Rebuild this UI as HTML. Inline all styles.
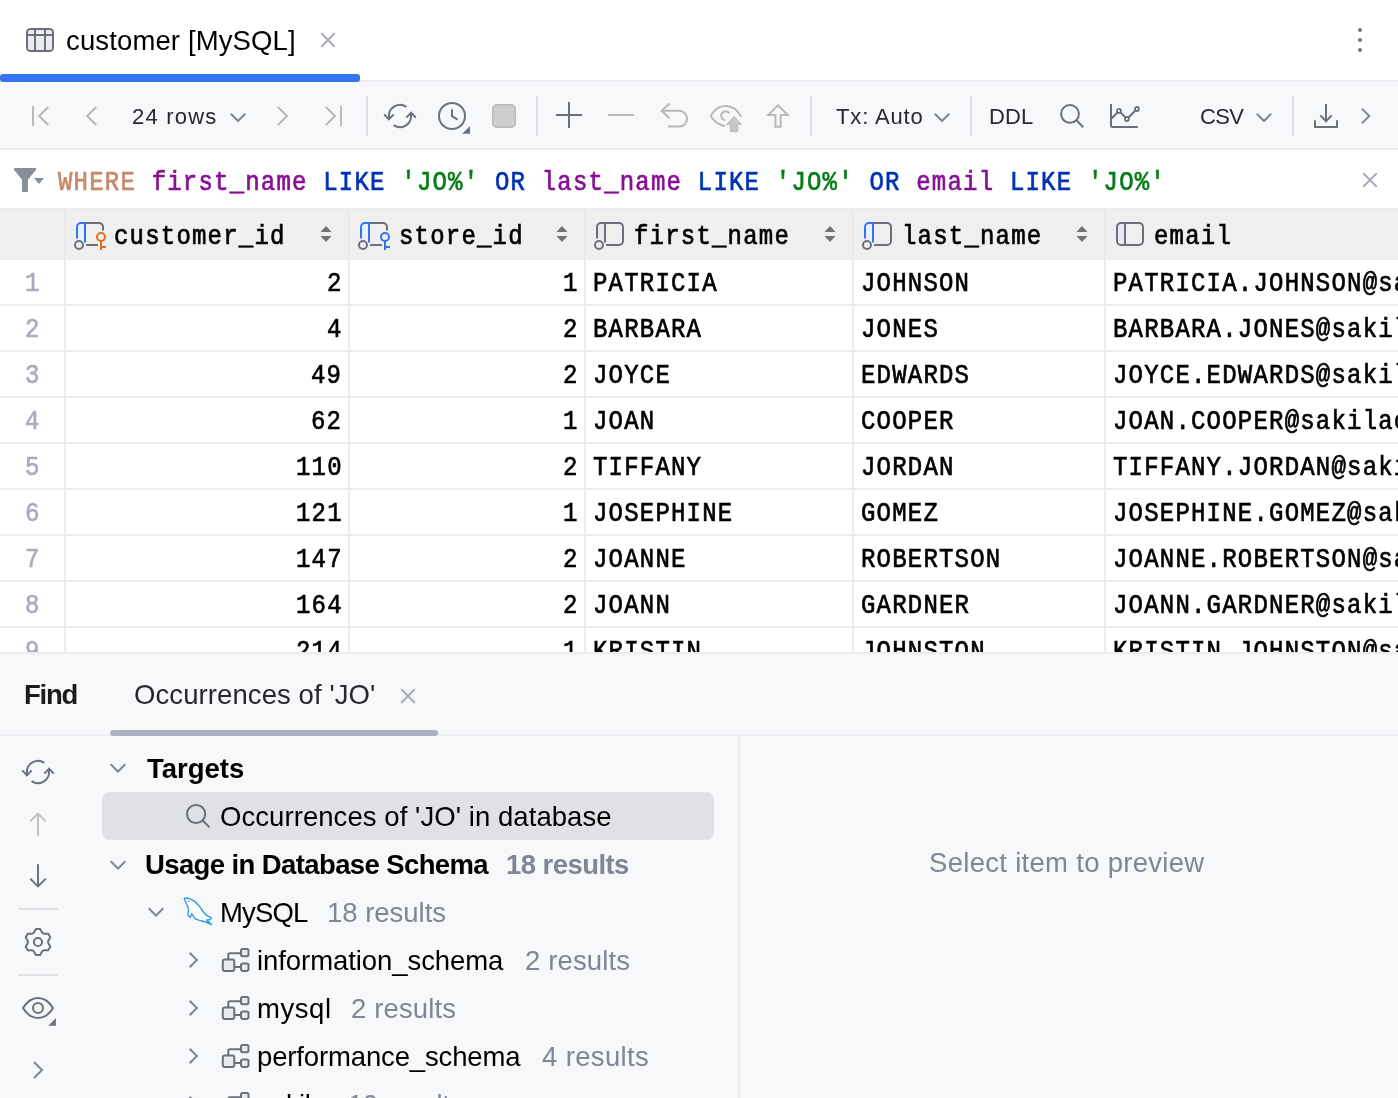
<!DOCTYPE html>
<html><head><meta charset="utf-8"><title>customer [MySQL]</title>
<style>
*{box-sizing:border-box;margin:0;padding:0}
html,body{width:1398px;height:1098px;overflow:hidden;background:#fff}
body{position:relative;font-family:"Liberation Sans",sans-serif;color:#000}
.abs{position:absolute}
.t{position:absolute;white-space:pre;line-height:1;will-change:transform}
.mono{font-family:"Liberation Mono",monospace;font-size:24px;letter-spacing:1.2px;transform:scaleY(1.18);transform-origin:0 18.39px;-webkit-text-stroke:0.6px currentColor}
svg{position:absolute;overflow:visible}
#tabbar{left:0;top:0;width:1398px;height:82px;background:#fff;border-bottom:2px solid #ebecf0}
#tabline{left:0;top:74px;width:360px;height:8px;background:#3574f0;border-radius:3px}
#toolbar{left:0;top:82px;width:1398px;height:68px;background:#f7f8fa;border-bottom:2px solid #ebecf0}
.sep{position:absolute;top:96px;width:2px;height:40px;background:#dcdee3}
#filter{left:0;top:150px;width:1398px;height:58px;background:#fff}
#thead{left:0;top:208px;width:1398px;height:52px;background:#efefef;border-top:2px solid #ebecf0}
#bottom{left:0;top:652px;width:1398px;height:446px;background:#f7f8fa;border-top:2px solid #ebecf0}
.up{transform:translateY(-1px) scaleY(1.18)}
</style></head><body>
<div id="tabbar" class="abs"></div>
<div id="tabline" class="abs"></div>
<div id="toolbar" class="abs"></div>
<div id="filter" class="abs"></div>
<div id="thead" class="abs"></div>
<div id="bottom" class="abs"></div>
<!--TAB-->
<svg style="left:25px;top:27px" width="30" height="26" viewBox="0 0 30 26"><rect x="2" y="2" width="26" height="22" rx="3.5" fill="#ebecf0" stroke="#6c707e" stroke-width="2"/><path d="M2 8H28M10 2V24M20 2V24" stroke="#6c707e" stroke-width="2" fill="none"/></svg>
<div class="t" style="left:66.00px;top:27.07px;font-size:27.5px;color:#000;letter-spacing:0.133px;">customer [MySQL]</div>
<svg style="left:320px;top:32px" width="16" height="16" viewBox="0 0 16 16"><path d="M1.8 1.8L14.2 14.2M14.2 1.8L1.8 14.2" stroke="#a8adbd" stroke-width="2" stroke-linecap="round" fill="none"/></svg>
<svg style="left:1354px;top:24px" width="12" height="32" viewBox="0 0 12 32"><circle cx="6" cy="6" r="2" fill="#6c707e"/><circle cx="6" cy="16" r="2" fill="#6c707e"/><circle cx="6" cy="26" r="2" fill="#6c707e"/></svg>
<!--TOOLBAR-->
<div class="sep" style="left:366px"></div>
<div class="sep" style="left:536px"></div>
<div class="sep" style="left:810px"></div>
<div class="sep" style="left:970px"></div>
<div class="sep" style="left:1292px"></div>
<svg style="left:32px;top:106px" width="18" height="20" viewBox="0 0 18 20" fill="none" stroke-width="2" stroke-linecap="butt" stroke-linejoin="miter"><path d="M1 0V20M16.3 1L7.2 10L16.3 19" stroke="#b8b8b8"/></svg>
<svg style="left:86px;top:106px" width="12" height="20" viewBox="0 0 12 20" fill="none" stroke-width="2" stroke-linecap="butt" stroke-linejoin="miter"><path d="M10.3 1L1.2 10L10.3 19" stroke="#b8b8b8"/></svg>
<div class="t" style="left:132.00px;top:105.72px;font-size:22px;color:#27282e;letter-spacing:1.200px;">24 rows</div>
<svg style="left:230px;top:113px" width="16" height="10" viewBox="0 0 16 10" fill="none" stroke-width="2" stroke-linecap="butt" stroke-linejoin="miter"><path d="M0.8 0.8L8 8L15.2 0.8" stroke="#818594"/></svg>
<svg style="left:276px;top:106px" width="12" height="20" viewBox="0 0 12 20" fill="none" stroke-width="2" stroke-linecap="butt" stroke-linejoin="miter"><path d="M1.9 1L11 10L1.9 19" stroke="#b8b8b8"/></svg>
<svg style="left:324px;top:106px" width="18" height="20" viewBox="0 0 18 20" fill="none" stroke-width="2" stroke-linecap="butt" stroke-linejoin="miter"><path d="M17 0V20M1.9 1L11 10L1.9 19" stroke="#b8b8b8"/></svg>
<svg style="left:384px;top:100px" width="32" height="32" viewBox="0 0 32 32" fill="none" stroke-width="2" stroke-linecap="butt" stroke-linejoin="miter"><path d="M4.9 19V16A11.1 11.1 0 0 1 22.4 6.9M27.1 13V16A11.1 11.1 0 0 1 9.6 25.1" stroke="#6c707e"/><path d="M0.2 14.4L4.9 19.4L9.6 14.4M22.4 17.6L27.1 12.6L31.8 17.6" stroke="#6c707e"/></svg>
<svg style="left:438px;top:102px" width="34" height="34" viewBox="0 0 34 34" fill="none" stroke-width="2" stroke-linecap="butt" stroke-linejoin="miter"><circle cx="14" cy="14" r="13" stroke="#6c707e"/><path d="M14 7.2V14.2L19.6 17.6" stroke="#6c707e"/><path d="M32 24V31.8H24.2Z" fill="#6c707e" stroke="none"/></svg>
<svg style="left:492px;top:104px" width="24" height="24" viewBox="0 0 24 24" fill="none" stroke-width="2" stroke-linecap="butt" stroke-linejoin="miter"><rect x="0.75" y="0.75" width="22.5" height="22.5" rx="4" fill="#cecece" stroke="#b9b9b9" stroke-width="1.5"/></svg>
<svg style="left:556px;top:102px" width="26" height="26" viewBox="0 0 26 26" fill="none" stroke-width="2" stroke-linecap="butt" stroke-linejoin="miter"><path d="M13 0V26M0 13H26" stroke="#6c707e"/></svg>
<svg style="left:608px;top:113px" width="26" height="4" viewBox="0 0 26 4" fill="none" stroke-width="2" stroke-linecap="butt" stroke-linejoin="miter"><path d="M0 2H26" stroke="#b8b8b8"/></svg>
<svg style="left:660px;top:102px" width="30" height="28" viewBox="0 0 30 28" fill="none" stroke-width="2" stroke-linecap="butt" stroke-linejoin="miter"><path d="M9.6 1.5L1.6 8.8L9.6 16.3M2 8.8H19.2A7.9 7.9 0 0 1 19.2 24.6H8.2" stroke="#b8b8b8"/></svg>
<svg style="left:708px;top:102px" width="36" height="32" viewBox="0 0 36 32" fill="none" stroke-width="2" stroke-linecap="butt" stroke-linejoin="miter"><path d="M2.6 13.8C6 8 11 3.9 17.6 3.9S30 8.5 33.2 14.9M2.6 13.8C5.5 19 10.5 22.8 17 24" stroke="#b8b8b8"/><path d="M21.5 11.55A4.5 4.5 0 1 0 17.2 18.28" stroke="#b8b8b8"/><path d="M26 14.4L33.4 22.4H29.8V29.4H22.4V22.4H18.6Z" fill="#c8c8c8" stroke="#b8b8b8" stroke-width="1"/></svg>
<svg style="left:764px;top:102px" width="28" height="28" viewBox="0 0 28 28" fill="none" stroke-width="2" stroke-linecap="butt" stroke-linejoin="miter"><path d="M14 3.3L23.8 13.1H16.7V24.7H11.4V13.1H4.2Z" stroke="#b8b8b8"/></svg>
<div class="t" style="left:835.80px;top:105.72px;font-size:22px;color:#27282e;letter-spacing:0.857px;">Tx: Auto</div>
<svg style="left:934px;top:113px" width="16" height="10" viewBox="0 0 16 10" fill="none" stroke-width="2" stroke-linecap="butt" stroke-linejoin="miter"><path d="M0.8 0.8L8 8L15.2 0.8" stroke="#818594"/></svg>
<div class="t" style="left:989.30px;top:105.72px;font-size:22px;color:#27282e;letter-spacing:0.100px;">DDL</div>
<svg style="left:1058px;top:102px" width="28" height="28" viewBox="0 0 28 28" fill="none" stroke-width="2" stroke-linecap="butt" stroke-linejoin="miter"><circle cx="12" cy="11.9" r="8.9" stroke="#6c707e"/><path d="M18.4 18.3L25.3 25.2" stroke="#6c707e"/></svg>
<svg style="left:1108px;top:102px" width="32" height="28" viewBox="0 0 32 28" fill="none" stroke-width="2" stroke-linecap="butt" stroke-linejoin="miter"><path d="M3 2V23.4A1.5 1.5 0 0 0 4.5 24.9H29.8" stroke="#6c707e"/><path d="M3.5 16.5L11 8.9L18.9 17L28.9 7" stroke="#6c707e"/><circle cx="11" cy="8.9" r="2" fill="#f7f8fa" stroke="#6c707e" stroke-width="1.8"/><circle cx="18.9" cy="17" r="2" fill="#f7f8fa" stroke="#6c707e" stroke-width="1.8"/><circle cx="28.9" cy="7" r="2" fill="#f7f8fa" stroke="#6c707e" stroke-width="1.8"/></svg>
<div class="t" style="left:1200.00px;top:105.72px;font-size:22px;color:#27282e;letter-spacing:-0.600px;">CSV</div>
<svg style="left:1256px;top:113px" width="16" height="10" viewBox="0 0 16 10" fill="none" stroke-width="2" stroke-linecap="butt" stroke-linejoin="miter"><path d="M0.8 0.8L8 8L15.2 0.8" stroke="#818594"/></svg>
<svg style="left:1313px;top:102px" width="26" height="26" viewBox="0 0 26 26" fill="none" stroke-width="2" stroke-linecap="butt" stroke-linejoin="miter"><path d="M13 2V19M7.3 13.4L13 19.2L18.7 13.4M2 18.3V24.9H24V18.3" stroke="#6c707e"/></svg>
<svg style="left:1360px;top:106px" width="12" height="20" viewBox="0 0 12 20" fill="none" stroke-width="2" stroke-linecap="butt" stroke-linejoin="miter"><path d="M1.9 2.6L9.3 10L1.9 17.4" stroke="#818594"/></svg>
<!--FILTER-->
<svg style="left:13px;top:168px" width="32" height="24" viewBox="0 0 32 24" fill="none" stroke-width="2" stroke-linecap="butt" stroke-linejoin="miter"><path d="M1 0H23.1V1.8L14.9 11.7V24H9V11.7L1 1.8Z" fill="#85909a" stroke="none"/><path d="M21 10H31L26 16Z" fill="#85909a" stroke="none"/></svg>
<div class="t mono" style="left:58.40px;top:172.01px;color:#000;"><span style="color:#c8896a">WHERE</span> <span style="color:#871094">first_name</span> <span style="color:#0033b3">LIKE</span> <span style="color:#067d17">'JO%'</span> <span style="color:#0033b3">OR</span> <span style="color:#871094">last_name</span> <span style="color:#0033b3">LIKE</span> <span style="color:#067d17">'JO%'</span> <span style="color:#0033b3">OR</span> <span style="color:#871094">email</span> <span style="color:#0033b3">LIKE</span> <span style="color:#067d17">'JO%'</span></div>
<svg style="left:1362px;top:172px" width="16" height="16" viewBox="0 0 16 16"><path d="M1.8 1.8L14.2 14.2M14.2 1.8L1.8 14.2" stroke="#a8adbd" stroke-width="2" stroke-linecap="round" fill="none"/></svg>
<!--HEAD-->
<div class="abs" style="left:64px;top:210px;width:2px;height:48px;background:#e9eaee"></div>
<div class="abs" style="left:348px;top:210px;width:2px;height:48px;background:#e9eaee"></div>
<div class="abs" style="left:584px;top:210px;width:2px;height:48px;background:#e9eaee"></div>
<div class="abs" style="left:852px;top:210px;width:2px;height:48px;background:#e9eaee"></div>
<div class="abs" style="left:1104px;top:210px;width:2px;height:48px;background:#e9eaee"></div>
<div class="abs" style="left:0;top:258px;width:1398px;height:2px;background:#ebecf0"></div>
<svg style="left:72px;top:220px" width="36" height="32" viewBox="0 0 36 32" fill="none" stroke-width="2" stroke-linecap="butt" stroke-linejoin="miter"><path d="M6 19V6A2 2 0 0 1 8 4H12V19Z" fill="#e9f0ff" stroke="none"/><path d="M13 3H27A4 4 0 0 1 31 7V10.4M14.1 25H26" stroke="#6c707e"/><path d="M5 18.6V7A4 4 0 0 1 9 3H13.5M13 3V22.6" stroke="#3574f0"/><circle cx="7" cy="25" r="4" stroke="#6c707e"/><circle cx="29" cy="17" r="4" stroke="#e66d17"/><path d="M29 21V30M29 27H34" stroke="#e66d17"/></svg>
<div class="t mono" style="left:114.10px;top:226.01px;color:#000;">customer_id</div>
<svg style="left:320px;top:226px" width="12" height="16" viewBox="0 0 12 16" fill="none" stroke-width="2" stroke-linecap="butt" stroke-linejoin="miter"><path d="M6 0L11.5 6H0.5Z" fill="#737373" stroke="none"/><path d="M6 16L11.5 10H0.5Z" fill="#737373" stroke="none"/></svg>
<svg style="left:356px;top:220px" width="36" height="32" viewBox="0 0 36 32" fill="none" stroke-width="2" stroke-linecap="butt" stroke-linejoin="miter"><path d="M6 19V6A2 2 0 0 1 8 4H12V19Z" fill="#e9f0ff" stroke="none"/><path d="M13 3H27A4 4 0 0 1 31 7V10.4M14.1 25H26" stroke="#6c707e"/><path d="M5 18.6V7A4 4 0 0 1 9 3H13.5M13 3V22.6" stroke="#3574f0"/><circle cx="7" cy="25" r="4" stroke="#6c707e"/><circle cx="29" cy="17" r="4" stroke="#3574f0"/><path d="M29 21V30M29 27H34" stroke="#3574f0"/></svg>
<div class="t mono" style="left:398.60px;top:226.01px;color:#000;">store_id</div>
<svg style="left:556px;top:226px" width="12" height="16" viewBox="0 0 12 16" fill="none" stroke-width="2" stroke-linecap="butt" stroke-linejoin="miter"><path d="M6 0L11.5 6H0.5Z" fill="#737373" stroke="none"/><path d="M6 16L11.5 10H0.5Z" fill="#737373" stroke="none"/></svg>
<svg style="left:592px;top:220px" width="36" height="32" viewBox="0 0 36 32" fill="none" stroke-width="2" stroke-linecap="butt" stroke-linejoin="miter"><path d="M6 19V6A2 2 0 0 1 8 4H12V19Z" fill="#e9eaf0" stroke="none"/><path d="M13 3H27A4 4 0 0 1 31 7V21A4 4 0 0 1 27 25H14.1" stroke="#6c707e"/><path d="M5 18.6V7A4 4 0 0 1 9 3H13.5M13 3V22.6" stroke="#6c707e"/><circle cx="7" cy="25" r="4" stroke="#6c707e"/></svg>
<div class="t mono" style="left:634.10px;top:226.01px;color:#000;">first_name</div>
<svg style="left:824px;top:226px" width="12" height="16" viewBox="0 0 12 16" fill="none" stroke-width="2" stroke-linecap="butt" stroke-linejoin="miter"><path d="M6 0L11.5 6H0.5Z" fill="#737373" stroke="none"/><path d="M6 16L11.5 10H0.5Z" fill="#737373" stroke="none"/></svg>
<svg style="left:860px;top:220px" width="36" height="32" viewBox="0 0 36 32" fill="none" stroke-width="2" stroke-linecap="butt" stroke-linejoin="miter"><path d="M6 19V6A2 2 0 0 1 8 4H12V19Z" fill="#e9f0ff" stroke="none"/><path d="M13 3H27A4 4 0 0 1 31 7V21A4 4 0 0 1 27 25H14.1" stroke="#6c707e"/><path d="M5 18.6V7A4 4 0 0 1 9 3H13.5M13 3V22.6" stroke="#3574f0"/><circle cx="7" cy="25" r="4" stroke="#6c707e"/></svg>
<div class="t mono" style="left:902.10px;top:226.01px;color:#000;">last_name</div>
<svg style="left:1076px;top:226px" width="12" height="16" viewBox="0 0 12 16" fill="none" stroke-width="2" stroke-linecap="butt" stroke-linejoin="miter"><path d="M6 0L11.5 6H0.5Z" fill="#737373" stroke="none"/><path d="M6 16L11.5 10H0.5Z" fill="#737373" stroke="none"/></svg>
<svg style="left:1112px;top:220px" width="36" height="32" viewBox="0 0 36 32" fill="none" stroke-width="2" stroke-linecap="butt" stroke-linejoin="miter"><rect x="6" y="4" width="7" height="20" fill="#e9eaf0" stroke="none"/><rect x="5" y="3" width="26" height="22" rx="4" stroke="#6c707e"/><path d="M13 3V25" stroke="#6c707e"/></svg>
<div class="t mono" style="left:1154.10px;top:226.01px;color:#000;">email</div>
<!--ROWS-->
<div class="abs" style="left:0;top:260px;width:1398px;height:392px;overflow:hidden">
<div class="abs" style="left:64px;top:0;width:2px;height:392px;background:#ebecf0"></div>
<div class="abs" style="left:348px;top:0;width:2px;height:392px;background:#ebecf0"></div>
<div class="abs" style="left:584px;top:0;width:2px;height:392px;background:#ebecf0"></div>
<div class="abs" style="left:852px;top:0;width:2px;height:392px;background:#ebecf0"></div>
<div class="abs" style="left:1104px;top:0;width:2px;height:392px;background:#ebecf0"></div>
<div class="abs" style="left:0;top:44px;width:1398px;height:2px;background:#ebecf0"></div>
<div class="t mono up" style="left:24.60px;top:14.01px;color:#a8adbd;">1</div>
<div class="t mono up" style="left:327.00px;top:14.01px;color:#000;">2</div>
<div class="t mono up" style="left:563.00px;top:14.01px;color:#000;">1</div>
<div class="t mono up" style="left:592.60px;top:14.01px;color:#000;">PATRICIA</div>
<div class="t mono up" style="left:860.60px;top:14.01px;color:#000;">JOHNSON</div>
<div class="t mono up" style="left:1112.60px;top:14.01px;color:#000;">PATRICIA.JOHNSON@sakilacustomer.org</div>
<div class="abs" style="left:0;top:90px;width:1398px;height:2px;background:#ebecf0"></div>
<div class="t mono up" style="left:24.60px;top:60.01px;color:#a8adbd;">2</div>
<div class="t mono up" style="left:327.00px;top:60.01px;color:#000;">4</div>
<div class="t mono up" style="left:563.00px;top:60.01px;color:#000;">2</div>
<div class="t mono up" style="left:592.60px;top:60.01px;color:#000;">BARBARA</div>
<div class="t mono up" style="left:860.60px;top:60.01px;color:#000;">JONES</div>
<div class="t mono up" style="left:1112.60px;top:60.01px;color:#000;">BARBARA.JONES@sakilacustomer.org</div>
<div class="abs" style="left:0;top:136px;width:1398px;height:2px;background:#ebecf0"></div>
<div class="t mono up" style="left:24.60px;top:106.01px;color:#a8adbd;">3</div>
<div class="t mono up" style="left:311.40px;top:106.01px;color:#000;">49</div>
<div class="t mono up" style="left:563.00px;top:106.01px;color:#000;">2</div>
<div class="t mono up" style="left:592.60px;top:106.01px;color:#000;">JOYCE</div>
<div class="t mono up" style="left:860.60px;top:106.01px;color:#000;">EDWARDS</div>
<div class="t mono up" style="left:1112.60px;top:106.01px;color:#000;">JOYCE.EDWARDS@sakilacustomer.org</div>
<div class="abs" style="left:0;top:182px;width:1398px;height:2px;background:#ebecf0"></div>
<div class="t mono up" style="left:24.60px;top:152.01px;color:#a8adbd;">4</div>
<div class="t mono up" style="left:311.40px;top:152.01px;color:#000;">62</div>
<div class="t mono up" style="left:563.00px;top:152.01px;color:#000;">1</div>
<div class="t mono up" style="left:592.60px;top:152.01px;color:#000;">JOAN</div>
<div class="t mono up" style="left:860.60px;top:152.01px;color:#000;">COOPER</div>
<div class="t mono up" style="left:1112.60px;top:152.01px;color:#000;">JOAN.COOPER@sakilacustomer.org</div>
<div class="abs" style="left:0;top:228px;width:1398px;height:2px;background:#ebecf0"></div>
<div class="t mono up" style="left:24.60px;top:198.01px;color:#a8adbd;">5</div>
<div class="t mono up" style="left:295.80px;top:198.01px;color:#000;">110</div>
<div class="t mono up" style="left:563.00px;top:198.01px;color:#000;">2</div>
<div class="t mono up" style="left:592.60px;top:198.01px;color:#000;">TIFFANY</div>
<div class="t mono up" style="left:860.60px;top:198.01px;color:#000;">JORDAN</div>
<div class="t mono up" style="left:1112.60px;top:198.01px;color:#000;">TIFFANY.JORDAN@sakilacustomer.org</div>
<div class="abs" style="left:0;top:274px;width:1398px;height:2px;background:#ebecf0"></div>
<div class="t mono up" style="left:24.60px;top:244.01px;color:#a8adbd;">6</div>
<div class="t mono up" style="left:295.80px;top:244.01px;color:#000;">121</div>
<div class="t mono up" style="left:563.00px;top:244.01px;color:#000;">1</div>
<div class="t mono up" style="left:592.60px;top:244.01px;color:#000;">JOSEPHINE</div>
<div class="t mono up" style="left:860.60px;top:244.01px;color:#000;">GOMEZ</div>
<div class="t mono up" style="left:1112.60px;top:244.01px;color:#000;">JOSEPHINE.GOMEZ@sakilacustomer.org</div>
<div class="abs" style="left:0;top:320px;width:1398px;height:2px;background:#ebecf0"></div>
<div class="t mono up" style="left:24.60px;top:290.01px;color:#a8adbd;">7</div>
<div class="t mono up" style="left:295.80px;top:290.01px;color:#000;">147</div>
<div class="t mono up" style="left:563.00px;top:290.01px;color:#000;">2</div>
<div class="t mono up" style="left:592.60px;top:290.01px;color:#000;">JOANNE</div>
<div class="t mono up" style="left:860.60px;top:290.01px;color:#000;">ROBERTSON</div>
<div class="t mono up" style="left:1112.60px;top:290.01px;color:#000;">JOANNE.ROBERTSON@sakilacustomer.org</div>
<div class="abs" style="left:0;top:366px;width:1398px;height:2px;background:#ebecf0"></div>
<div class="t mono up" style="left:24.60px;top:336.01px;color:#a8adbd;">8</div>
<div class="t mono up" style="left:295.80px;top:336.01px;color:#000;">164</div>
<div class="t mono up" style="left:563.00px;top:336.01px;color:#000;">2</div>
<div class="t mono up" style="left:592.60px;top:336.01px;color:#000;">JOANN</div>
<div class="t mono up" style="left:860.60px;top:336.01px;color:#000;">GARDNER</div>
<div class="t mono up" style="left:1112.60px;top:336.01px;color:#000;">JOANN.GARDNER@sakilacustomer.org</div>
<div class="abs" style="left:0;top:412px;width:1398px;height:2px;background:#ebecf0"></div>
<div class="t mono up" style="left:24.60px;top:382.01px;color:#a8adbd;">9</div>
<div class="t mono up" style="left:295.80px;top:382.01px;color:#000;">214</div>
<div class="t mono up" style="left:563.00px;top:382.01px;color:#000;">1</div>
<div class="t mono up" style="left:592.60px;top:382.01px;color:#000;">KRISTIN</div>
<div class="t mono up" style="left:860.60px;top:382.01px;color:#000;">JOHNSTON</div>
<div class="t mono up" style="left:1112.60px;top:382.01px;color:#000;">KRISTIN.JOHNSTON@sakilacustomer.org</div>
</div>
<!--FIND-->
<div class="t" style="left:23.80px;top:681.07px;font-size:27.5px;color:#1b1b1d;letter-spacing:-1.267px;font-weight:bold;">Find</div>
<div class="t" style="left:134.30px;top:681.07px;font-size:27.5px;color:#27282e;letter-spacing:0.089px;">Occurrences of 'JO'</div>
<svg style="left:400px;top:688.3px" width="16" height="16" viewBox="0 0 16 16"><path d="M1.8 1.8L14.2 14.2M14.2 1.8L1.8 14.2" stroke="#a8adbd" stroke-width="2" stroke-linecap="round" fill="none"/></svg>
<div class="abs" style="left:0;top:734px;width:1398px;height:2px;background:#ebecf0"></div>
<div class="abs" style="left:110px;top:730px;width:328px;height:6px;background:#adb1c3;border-radius:3px"></div>
<div class="abs" style="left:738px;top:736px;width:2px;height:362px;background:#ebecf0"></div>
<svg style="left:22px;top:756px" width="32" height="32" viewBox="0 0 32 32" fill="none" stroke-width="2" stroke-linecap="butt" stroke-linejoin="miter"><path d="M4.9 19V16A11.1 11.1 0 0 1 22.4 6.9M27.1 13V16A11.1 11.1 0 0 1 9.6 25.1" stroke="#6c707e"/><path d="M0.2 14.4L4.9 19.4L9.6 14.4M22.4 17.6L27.1 12.6L31.8 17.6" stroke="#6c707e"/></svg>
<svg style="left:28px;top:812px" width="20" height="24" viewBox="0 0 20 24" fill="none" stroke-width="2" stroke-linecap="butt" stroke-linejoin="miter"><path d="M10 24V1.6M2.2 9.4L10 1.6L17.8 9.4" stroke="#c0c0c0"/></svg>
<svg style="left:28px;top:864px" width="20" height="24" viewBox="0 0 20 24" fill="none" stroke-width="2" stroke-linecap="butt" stroke-linejoin="miter"><path d="M10 0.2V22.4M2.2 14.6L10 22.4L17.8 14.6" stroke="#6c707e"/></svg>
<div class="abs" style="left:18px;top:908px;width:40px;height:2px;background:#dfe1e5"></div>
<svg style="left:24px;top:928px" width="28" height="28" viewBox="0 0 28 28" fill="none" stroke-width="2" stroke-linecap="butt" stroke-linejoin="miter"><path d="M11.89 1.00L16.11 1.00L17.92 4.22Q18.78 5.73 20.51 5.71L24.21 5.68L26.31 9.32L24.43 12.50Q23.55 14.00 24.43 15.50L26.31 18.68L24.21 22.32L20.51 22.29Q18.78 22.27 17.92 23.78L16.11 27.00L11.89 27.00L10.08 23.78Q9.23 22.27 7.49 22.29L3.79 22.32L1.69 18.68L3.57 15.50Q4.45 14.00 3.57 12.50L1.69 9.32L3.79 5.68L7.49 5.71Q9.22 5.73 10.08 4.22Z" stroke="#6c707e" stroke-linejoin="round"/><circle cx="14" cy="14" r="4.1" stroke="#6c707e"/></svg>
<div class="abs" style="left:18px;top:974px;width:40px;height:2px;background:#dfe1e5"></div>
<svg style="left:22px;top:996px" width="36" height="32" viewBox="0 0 36 32" fill="none" stroke-width="2" stroke-linecap="butt" stroke-linejoin="miter"><path d="M1 12C5 5.5 10 2 16 2S27 5.5 31 12C27 18.5 22 22 16 22S5 18.5 1 12Z" stroke="#6c707e" stroke-linejoin="round"/><circle cx="16" cy="12" r="5" stroke="#6c707e"/><path d="M33.9 22.1V29.8H26.2Z" fill="#6c707e" stroke="none"/></svg>
<svg style="left:33px;top:1061px" width="10" height="18" viewBox="0 0 10 18" fill="none" stroke-width="2" stroke-linecap="butt" stroke-linejoin="miter"><path d="M1 1L9 9L1 17" stroke="#818594"/></svg>
<svg style="left:109px;top:763px" width="18" height="10" viewBox="0 0 18 10" fill="none" stroke-width="2" stroke-linecap="butt" stroke-linejoin="miter"><path d="M1.7 1.2L9 8.5L16.3 1.2" stroke="#818594"/></svg>
<div class="t" style="left:146.90px;top:755.07px;font-size:27.5px;color:#000;letter-spacing:0.000px;font-weight:bold;">Targets</div>
<div class="abs" style="left:102px;top:792px;width:612px;height:48px;background:#dfe1e5;border-radius:8px"></div>
<svg style="left:185px;top:803px" width="26" height="26" viewBox="0 0 26 26" fill="none" stroke-width="2" stroke-linecap="butt" stroke-linejoin="miter"><circle cx="11.1" cy="11" r="9.1" stroke="#6c707e"/><path d="M17.6 17.5L24.6 24.4" stroke="#6c707e"/></svg>
<div class="t" style="left:220.30px;top:803.07px;font-size:27.5px;color:#000;letter-spacing:0.067px;">Occurrences of 'JO' in database</div>
<svg style="left:109px;top:860px" width="18" height="10" viewBox="0 0 18 10" fill="none" stroke-width="2" stroke-linecap="butt" stroke-linejoin="miter"><path d="M1.7 1.2L9 8.5L16.3 1.2" stroke="#818594"/></svg>
<div class="t" style="left:145.20px;top:851.07px;font-size:27.5px;color:#000;letter-spacing:-0.609px;font-weight:bold;">Usage in Database Schema</div>
<div class="t" style="left:506.20px;top:851.07px;font-size:27.5px;color:#818594;letter-spacing:-0.556px;font-weight:bold;">18 results</div>
<svg style="left:147px;top:907px" width="18" height="10" viewBox="0 0 18 10" fill="none" stroke-width="2" stroke-linecap="butt" stroke-linejoin="miter"><path d="M1.7 1.2L9 8.5L16.3 1.2" stroke="#818594"/></svg>
<svg style="left:182px;top:896px" width="32" height="30" viewBox="0 0 32 30" fill="none" stroke-width="2" stroke-linecap="butt" stroke-linejoin="miter"><path d="M2.2 2.6C4 1.5 7 2.2 10.1 3.8C13.5 5.5 16.5 9 18.5 11.7C20 14 21 16.5 25 19.6L29.2 21.9L28.7 23.6L24.5 24L29.6 28.6L26.4 27C24 26 22 25.5 20 25C17 24.5 15 23.5 13.3 22.8L9.6 17.7L8.2 21.4C6.5 20 5.5 18.5 5.9 18.2C6.8 15 6.4 12.6 6.4 12.6C5.5 9 4.5 8 4.5 8Z" fill="#fff" stroke="#2f9bd8" stroke-width="1.4" stroke-linejoin="round"/><circle cx="6.7" cy="5.2" r="0.8" fill="#2f9bd8" stroke="none"/></svg>
<div class="t" style="left:219.60px;top:899.07px;font-size:27.5px;color:#000;letter-spacing:-0.850px;">MySQL</div>
<div class="t" style="left:327.40px;top:899.07px;font-size:27.5px;color:#818594;letter-spacing:-0.022px;">18 results</div>
<svg style="left:188.4px;top:951px" width="10" height="18" viewBox="0 0 10 18" fill="none" stroke-width="2" stroke-linecap="butt" stroke-linejoin="miter"><path d="M1.6 1.7L8.9 9L1.6 16.3" stroke="#818594"/></svg>
<svg style="left:220.8px;top:948px" width="30" height="26" viewBox="0 0 30 26" fill="none" stroke-width="2" stroke-linecap="butt" stroke-linejoin="miter"><rect x="1.8" y="11.4" width="11.5" height="11.5" rx="2" fill="#ebecf0" stroke="#6c707e"/><rect x="20" y="1.1" width="7.5" height="7.1" rx="1.8" fill="#ebecf0" stroke="#6c707e"/><rect x="20" y="15.4" width="7.5" height="7.5" rx="1.8" fill="#ebecf0" stroke="#6c707e"/><path d="M7.3 11.4V6.8A1.5 1.5 0 0 1 8.8 5.3H20M13.3 19H20" stroke="#6c707e"/></svg>
<div class="t" style="left:257.40px;top:947.07px;font-size:27.5px;color:#000;letter-spacing:-0.071px;">information_schema</div>
<div class="t" style="left:525.10px;top:947.07px;font-size:27.5px;color:#818594;letter-spacing:0.125px;">2 results</div>
<svg style="left:188.4px;top:999px" width="10" height="18" viewBox="0 0 10 18" fill="none" stroke-width="2" stroke-linecap="butt" stroke-linejoin="miter"><path d="M1.6 1.7L8.9 9L1.6 16.3" stroke="#818594"/></svg>
<svg style="left:220.8px;top:996px" width="30" height="26" viewBox="0 0 30 26" fill="none" stroke-width="2" stroke-linecap="butt" stroke-linejoin="miter"><rect x="1.8" y="11.4" width="11.5" height="11.5" rx="2" fill="#ebecf0" stroke="#6c707e"/><rect x="20" y="1.1" width="7.5" height="7.1" rx="1.8" fill="#ebecf0" stroke="#6c707e"/><rect x="20" y="15.4" width="7.5" height="7.5" rx="1.8" fill="#ebecf0" stroke="#6c707e"/><path d="M7.3 11.4V6.8A1.5 1.5 0 0 1 8.8 5.3H20M13.3 19H20" stroke="#6c707e"/></svg>
<div class="t" style="left:257.40px;top:995.07px;font-size:27.5px;color:#000;letter-spacing:0.550px;">mysql</div>
<div class="t" style="left:350.60px;top:995.07px;font-size:27.5px;color:#818594;letter-spacing:0.125px;">2 results</div>
<svg style="left:188.4px;top:1047px" width="10" height="18" viewBox="0 0 10 18" fill="none" stroke-width="2" stroke-linecap="butt" stroke-linejoin="miter"><path d="M1.6 1.7L8.9 9L1.6 16.3" stroke="#818594"/></svg>
<svg style="left:220.8px;top:1044px" width="30" height="26" viewBox="0 0 30 26" fill="none" stroke-width="2" stroke-linecap="butt" stroke-linejoin="miter"><rect x="1.8" y="11.4" width="11.5" height="11.5" rx="2" fill="#ebecf0" stroke="#6c707e"/><rect x="20" y="1.1" width="7.5" height="7.1" rx="1.8" fill="#ebecf0" stroke="#6c707e"/><rect x="20" y="15.4" width="7.5" height="7.5" rx="1.8" fill="#ebecf0" stroke="#6c707e"/><path d="M7.3 11.4V6.8A1.5 1.5 0 0 1 8.8 5.3H20M13.3 19H20" stroke="#6c707e"/></svg>
<div class="t" style="left:257.40px;top:1043.07px;font-size:27.5px;color:#000;letter-spacing:-0.141px;">performance_schema</div>
<div class="t" style="left:542.30px;top:1043.07px;font-size:27.5px;color:#818594;letter-spacing:0.350px;">4 results</div>
<svg style="left:188.4px;top:1095px" width="10" height="18" viewBox="0 0 10 18" fill="none" stroke-width="2" stroke-linecap="butt" stroke-linejoin="miter"><path d="M1.6 1.7L8.9 9L1.6 16.3" stroke="#818594"/></svg>
<svg style="left:220.8px;top:1092px" width="30" height="26" viewBox="0 0 30 26" fill="none" stroke-width="2" stroke-linecap="butt" stroke-linejoin="miter"><rect x="1.8" y="11.4" width="11.5" height="11.5" rx="2" fill="#ebecf0" stroke="#6c707e"/><rect x="20" y="1.1" width="7.5" height="7.1" rx="1.8" fill="#ebecf0" stroke="#6c707e"/><rect x="20" y="15.4" width="7.5" height="7.5" rx="1.8" fill="#ebecf0" stroke="#6c707e"/><path d="M7.3 11.4V6.8A1.5 1.5 0 0 1 8.8 5.3H20M13.3 19H20" stroke="#6c707e"/></svg>
<div class="t" style="left:258.40px;top:1091.07px;font-size:27.5px;color:#000;letter-spacing:-0.560px;">sakila</div>
<div class="t" style="left:347.50px;top:1091.07px;font-size:27.5px;color:#818594;letter-spacing:-0.444px;">10 results</div>
<div class="t" style="left:929.20px;top:849.07px;font-size:27.5px;color:#818594;letter-spacing:0.295px;">Select item to preview</div>
</body></html>
